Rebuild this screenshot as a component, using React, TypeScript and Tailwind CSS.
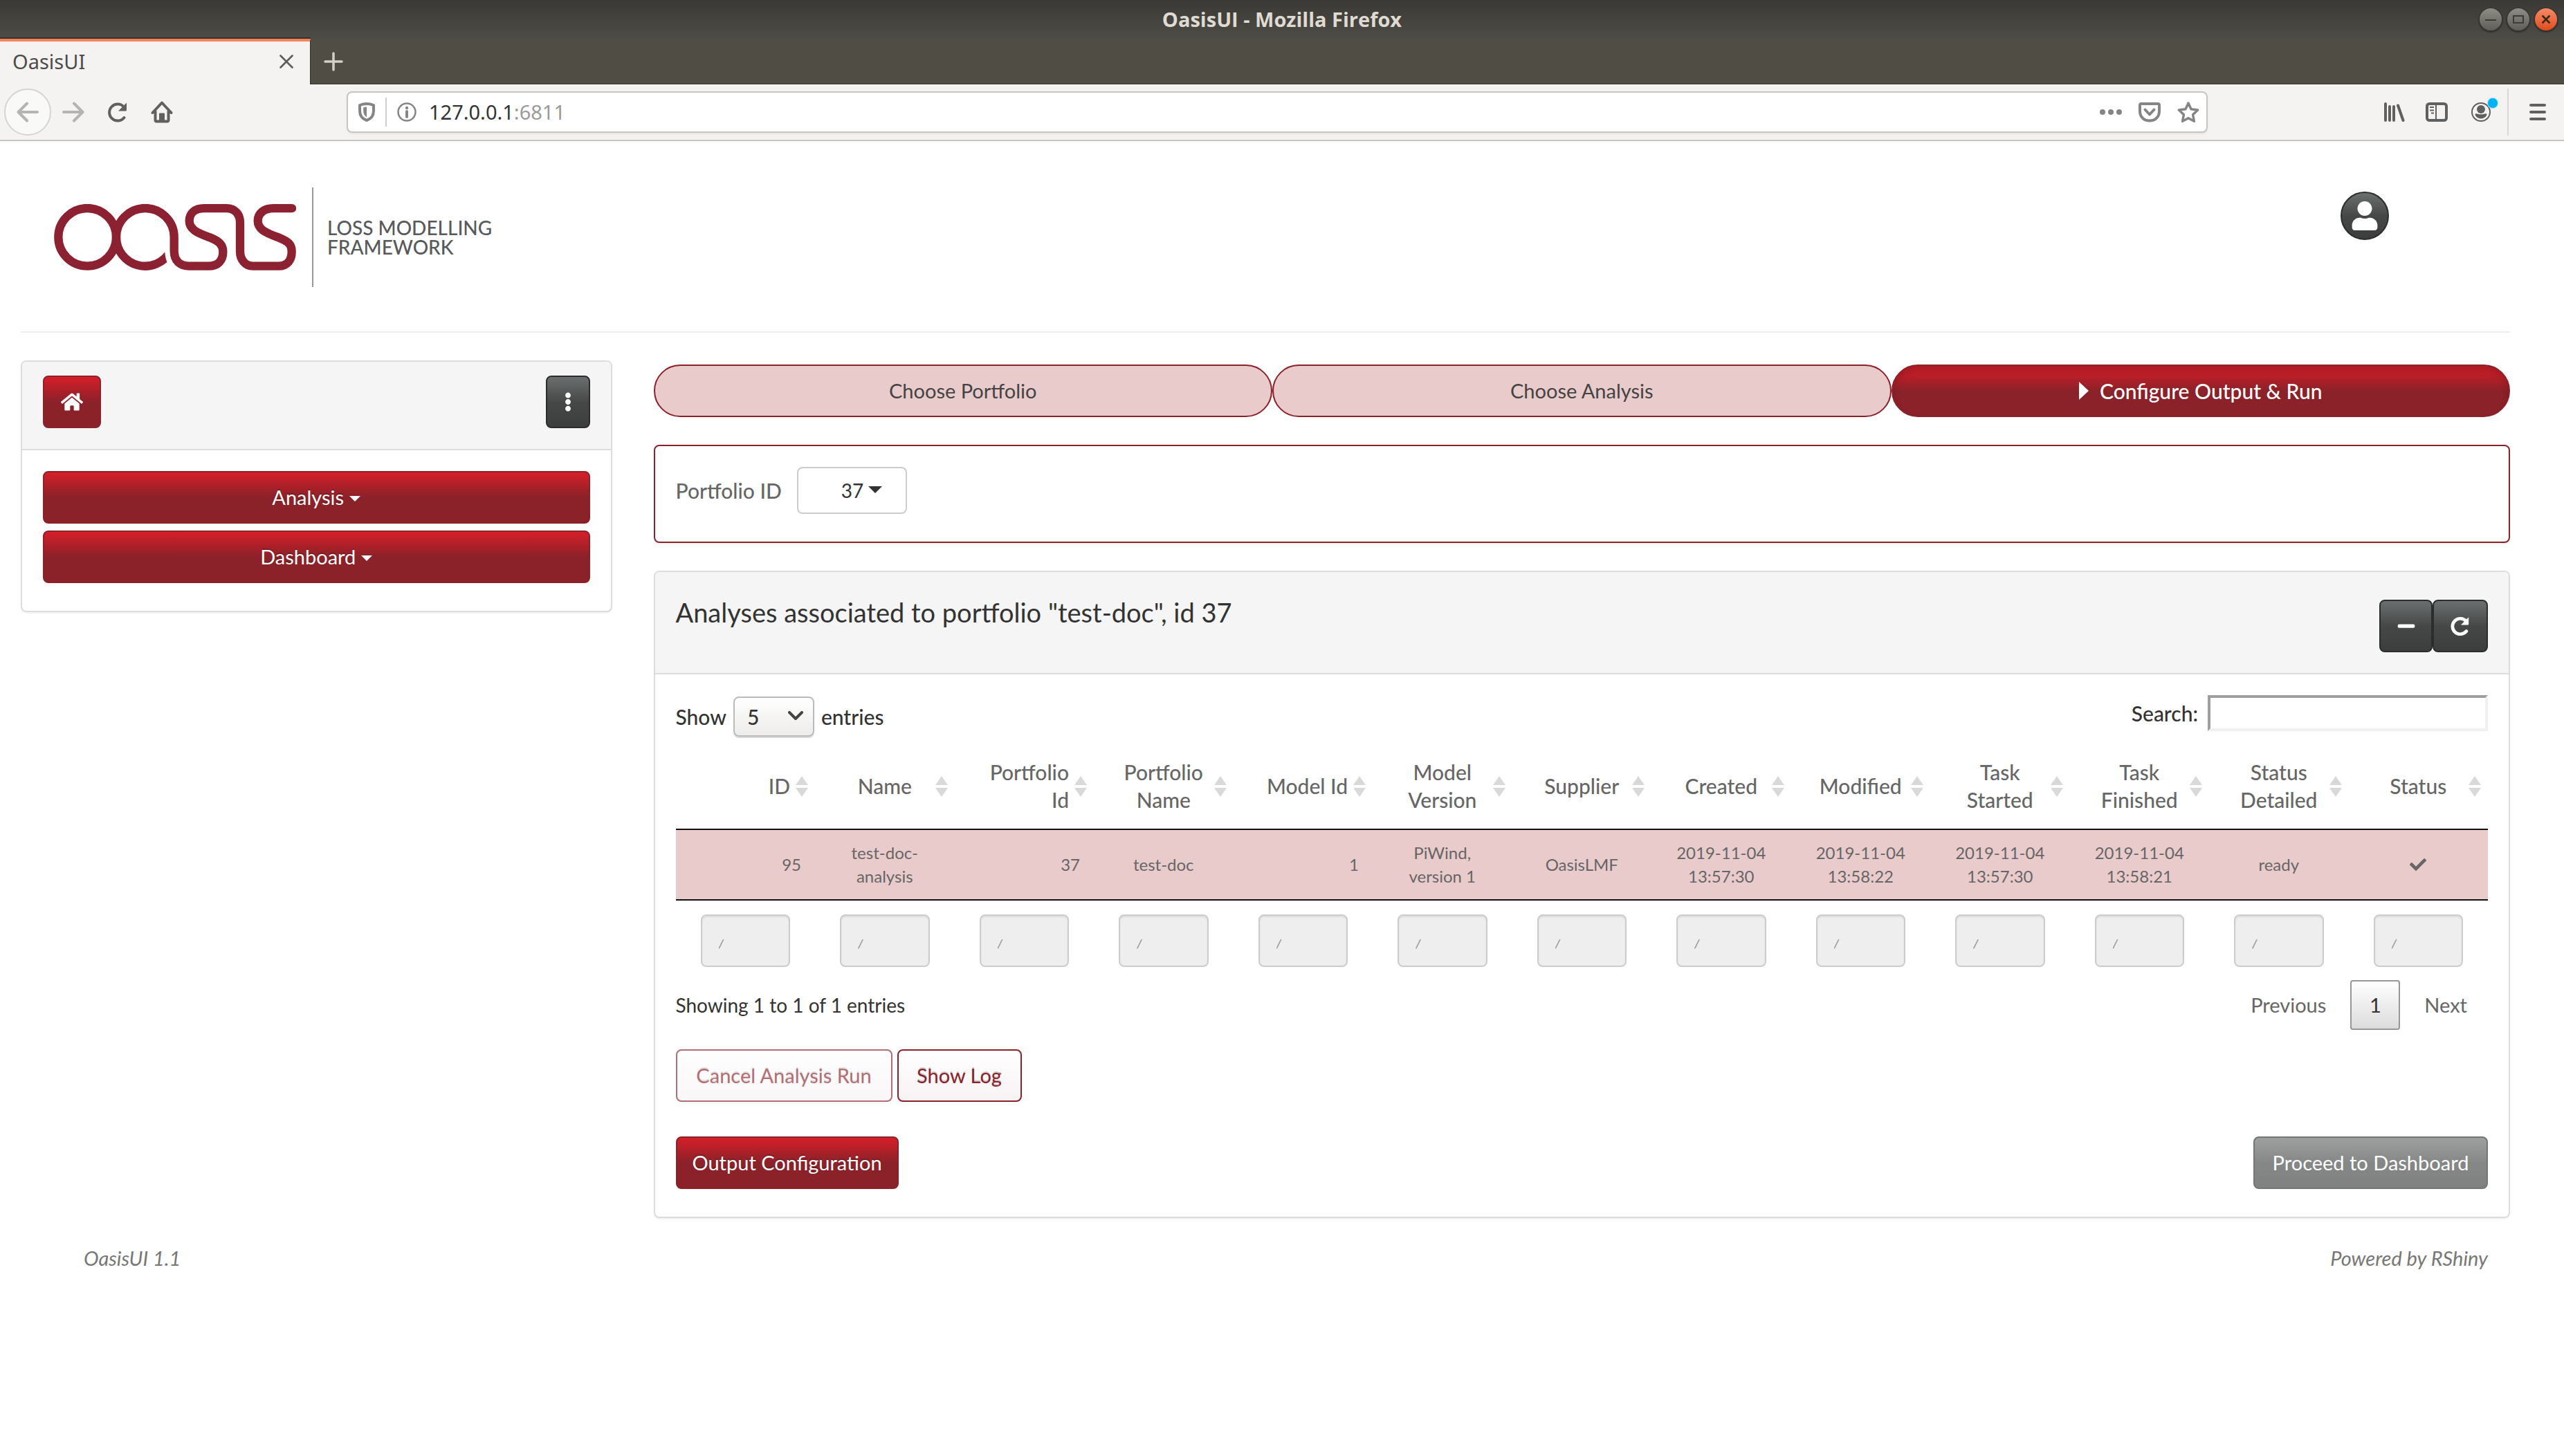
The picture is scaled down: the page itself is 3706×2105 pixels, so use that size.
import React from "react";
import { FaCheck, FaEllipsisV, FaHome, FaMinus, FaUser } from "react-icons/fa";

const RED_BUTTON =
  "h-[76px] rounded-lg border-2 border-[#8b2129] bg-[linear-gradient(#d61f29,#8b2129_50%,#8b2129)] text-[29px] text-white [text-shadow:0_-2px_0_rgba(0,0,0,0.2)]";
const DARK_BUTTON =
  "flex h-[76px] items-center justify-center rounded-lg border-2 border-[#2b2d2d] bg-[linear-gradient(#6b6f6f,#464847_50%,#3c3e3e)] text-[29px] text-white";

type Align = "right" | "center";
type Column = { title: string; value: React.ReactNode; align: Align };

const columns: Column[] = [
  { title: "ID", value: "95", align: "right" },
  { title: "Name", value: "test-doc-analysis", align: "center" },
  { title: "Portfolio Id", value: "37", align: "right" },
  { title: "Portfolio Name", value: "test-doc", align: "center" },
  { title: "Model Id", value: "1", align: "right" },
  { title: "Model Version", value: "PiWind, version 1", align: "center" },
  { title: "Supplier", value: "OasisLMF", align: "center" },
  { title: "Created", value: "2019-11-04 13:57:30", align: "center" },
  { title: "Modified", value: "2019-11-04 13:58:22", align: "center" },
  { title: "Task Started", value: "2019-11-04 13:57:30", align: "center" },
  { title: "Task Finished", value: "2019-11-04 13:58:21", align: "center" },
  { title: "Status Detailed", value: "ready", align: "center" },
  { title: "Status", value: <FaCheck className="mx-auto size-6" aria-label="completed" />, align: "center" },
];

function ReloadIcon({ className, width }: { className: string; width: number }) {
  return (
    <svg viewBox="0 0 32 32" className={className} fill="none" aria-hidden="true">
      <path d="M25.5 24A12 12 0 1 1 25 8.5" stroke="currentColor" strokeWidth={width} strokeLinecap="round" />
      <path d="M29 2.5v10.5a1.5 1.5 0 0 1-1.5 1.5H17z" fill="currentColor" />
    </svg>
  );
}

function WindowButtons() {
  return (
    <div className="flex gap-2">
      <button aria-label="Minimize" className="size-8 rounded-full bg-linear-to-b from-[#8f8d86] to-[#5f5e58] shadow-[0_1px_1px_2px_#35342f]">
        <svg viewBox="0 0 32 32" className="size-8" stroke="#3c3b37" strokeWidth="2"><path d="M8 17h16" /></svg>
      </button>
      <button aria-label="Maximize" className="size-8 rounded-full bg-linear-to-b from-[#8f8d86] to-[#5f5e58] shadow-[0_1px_1px_2px_#35342f]">
        <svg viewBox="0 0 32 32" className="size-8" fill="none" stroke="#3c3b37" strokeWidth="2"><path d="M9 11h14v10H9z" /></svg>
      </button>
      <button aria-label="Close" className="size-8 rounded-full bg-linear-to-b from-[#f58a66] to-[#df4a16] shadow-[0_1px_1px_2px_#35342f]">
        <svg viewBox="0 0 32 32" className="size-8" stroke="#3a2a12" strokeWidth="2.5"><path d="M10.500 10.500l11 11M21.500 10.500l-11 11" /></svg>
      </button>
    </div>
  );
}

function BrowserChrome() {
  return (
    <div className="font-['Noto_Sans','Open_Sans',sans-serif] text-[29px] leading-9 text-[#4c4c4c]">
      <div className="grid h-14 grid-cols-[1fr_auto_1fr] items-center bg-linear-to-b from-[#3a3935] to-[#4d4c46] px-2.5">
        <span />
        <h1 className="font-['Open_Sans',sans-serif] font-bold text-[#dfdbd2]">OasisUI - Mozilla Firefox</h1>
        <div className="flex justify-end"><WindowButtons /></div>
      </div>
      <div className="flex h-[66px] items-stretch border-b border-[#33322e] bg-[#504d45]">
        <div className="-mb-px flex w-[449px] items-center border-t-4 border-r border-t-[#f58559] border-r-[#33322e] bg-[#f4f3f1] pr-6 pb-1 pl-[18px] shadow-[0_-2px_0_#33322e]">
          <span className="flex-1">OasisUI</span>
          <button aria-label="Close tab">
            <svg viewBox="0 0 20 20" className="size-5" stroke="#5c5c5c" strokeWidth="2.600" strokeLinecap="round"><path d="M1.500 1.500l17 17M18.500 1.500l-17 17" /></svg>
          </button>
        </div>
        <button aria-label="New tab" className="flex w-[66px] items-center justify-center">
          <svg viewBox="0 0 28 28" className="size-7" stroke="#d3d0ca" strokeWidth="3.500" strokeLinecap="round"><path d="M14 2v24M2 14h24" /></svg>
        </button>
      </div>
      <div className="flex items-center border-b-2 border-[#c8c5c1] bg-[#f4f3f1] py-1.5 text-[#606060]">
        <div className="flex w-[501px] shrink-0 items-center pl-1.5">
          <button aria-label="Back" className="flex size-[68px] items-center justify-center rounded-full border-2 border-[#d5d4d2] bg-[#f9f9f8] text-[#b5b4b2]">
            <svg viewBox="0 0 32 32" className="size-8" fill="none" stroke="currentColor" strokeWidth="4" strokeLinecap="round" strokeLinejoin="round"><path d="M30 16H2.500M15 3.500L2.500 16 15 28.500" /></svg>
          </button>
          <button aria-label="Forward" className="ml-4 text-[#b5b4b2]">
            <svg viewBox="0 0 32 32" className="size-8" fill="none" stroke="currentColor" strokeWidth="4" strokeLinecap="round" strokeLinejoin="round"><path d="M2 16h27.500M17 3.500L29.500 16 17 28.500" /></svg>
          </button>
          <button aria-label="Reload" className="ml-8"><ReloadIcon className="size-8" width={4} /></button>
          <button aria-label="Home" className="ml-8">
            <svg viewBox="0 0 32 32" className="size-8" fill="none" stroke="currentColor" strokeWidth="4" strokeLinecap="round" strokeLinejoin="round">
              <path d="M2.500 17L16 2.500 29.500 17M6.500 15v13a1.500 1.500 0 0 0 1.500 1.500h16a1.500 1.500 0 0 0 1.500-1.500V15" />
              <path d="M13 29V18.500h6V29" fill="currentColor" strokeWidth="2" />
            </svg>
          </button>
        </div>
        <div className="flex h-[60px] min-w-0 flex-1 items-center rounded-lg border-2 border-[#c8c5c1] bg-white pr-2.5 pl-[15px] text-[#858585] shadow-[0_2px_3px_rgba(0,0,0,0.06)]">
          <svg viewBox="0 0 24 28" className="h-7 w-6" fill="none" aria-hidden="true">
            <path d="M12 2C8 2 5 2.800 2 4v8c0 7 4 12 10 14 6-2 10-7 10-14V4c-3-1.200-6-2-10-2z" stroke="currentColor" strokeWidth="4" strokeLinejoin="round" />
            <path d="M12 6.500v15c-3-2-4.800-5.500-4.800-9.500V7.500c1.500-.6 3-1 4.800-1z" fill="currentColor" />
          </svg>
          <span className="mx-[15px] h-[42px] w-0.5 bg-[#cfcdca]" />
          <svg viewBox="0 0 28 28" className="size-7" fill="none" stroke="currentColor" strokeWidth="2.500" aria-hidden="true">
            <circle cx="14" cy="14" r="12.500" /><path d="M14 13v8" strokeWidth="4" strokeLinecap="round" /><circle cx="14" cy="8" r="2.200" fill="currentColor" stroke="none" />
          </svg>
          <p className="ml-[18px] flex-1 text-[#9a9a9a]"><span className="text-[#333]">127.0.0.1</span>:6811</p>
          <button aria-label="Page actions">
            <svg viewBox="0 0 32 32" className="size-8" fill="currentColor"><circle cx="4" cy="16" r="4" /><circle cx="16" cy="16" r="4" /><circle cx="28" cy="16" r="4" /></svg>
          </button>
          <button aria-label="Save to Pocket" className="ml-6">
            <svg viewBox="0 0 32 32" className="size-8" fill="none" stroke="currentColor" strokeWidth="4" strokeLinecap="round" strokeLinejoin="round"><path d="M4 4h24a2 2 0 0 1 2 2v9c0 8-6 13.500-14 13.500S2 23 2 15V6a2 2 0 0 1 2-2z" /><path d="M9.500 12.500l6.500 7 6.500-7" /></svg>
          </button>
          <button aria-label="Bookmark this page" className="ml-6">
            <svg viewBox="0 0 32 32" className="size-8" fill="none" stroke="currentColor" strokeWidth="3.500" strokeLinejoin="round"><path d="M16 3l4 8.800 9.600 1.200-7 6.700 1.800 9.600L16 24.700l-8.400 4.600 1.800-9.600-7-6.700L12 11.800z" /></svg>
          </button>
        </div>
        <div className="flex w-[515px] shrink-0 items-center justify-end pr-[26px]">
          <button aria-label="Library">
            <svg viewBox="0 0 32 32" className="size-8" stroke="currentColor" strokeWidth="4" strokeLinecap="round"><path d="M4 4v24M10 8v20M16 8v20M22 6.500l7.500 21.500" /></svg>
          </button>
          <button aria-label="Sidebars" className="ml-[30px]">
            <svg viewBox="0 0 32 32" className="size-8" fill="none" stroke="currentColor" strokeWidth="4"><rect x="2" y="4" width="28" height="24" rx="3.500" /><path d="M15 4v24M6 9h6M6 13.500h6M8 17.500h4" strokeWidth="2" /></svg>
          </button>
          <button aria-label="Account" className="relative ml-8">
            <svg viewBox="0 0 32 32" className="size-8" fill="currentColor"><circle cx="16" cy="16" r="13" fill="none" stroke="currentColor" strokeWidth="2" /><circle cx="16" cy="12" r="6" /><path d="M8 18.500c1.500-.9 3 .8 8 .8s6.500-1.700 8-.8c1.800 1.300-2 7-8 7s-9.800-5.700-8-7z" /></svg>
            <span className="absolute -top-1 -right-2 size-3.5 rounded-full bg-[#00b3f4] ring-1 ring-[#a5e3f7]" />
          </button>
          <span className="ml-[22px] h-[68px] w-0.5 bg-[#dad8d5]" />
          <button aria-label="Open menu" className="ml-[30px]">
            <svg viewBox="0 0 24 32" className="h-8 w-6" stroke="currentColor" strokeWidth="4" strokeLinecap="round"><path d="M2 6h20M2 16h20M2 26h20" /></svg>
          </button>
        </div>
      </div>
    </div>
  );
}

function Logo() {
  return (
    <svg viewBox="24 105 1050 288" className="h-24 w-[350px]" fill="none" stroke="#8b2131" strokeWidth="37" role="img" aria-label="Oasis">
      <circle cx="168.500" cy="248.500" r="125.500" />
      <path d="M294 248.500A125.500 125.500 0 0 0 529 310" />
      <path d="M545 296C545 340 556 372 610 380" stroke="#fff" strokeWidth="82" />
      <path
        d="M294 248.500A125.500 125.500 0 0 1 545 248.500V308C545 350 570 374 610 374H695C735 374 757 350 757 313C757 285 745 268 700 250C645 230 611 215 611 178C611 145 635 123.500 675 123.500H772C810 123.500 831 150 831 185V310C831 345 852 374 887 374H998C1035 374 1055 348 1055 312C1055 280 1040 267 1000 251C935 228 908 212 908 178C908 145 935 123.500 975 123.500H1055"
      />
      <circle cx="1056" cy="123.500" r="18.500" fill="#8b2131" stroke="none" />
    </svg>
  );
}

function Sidebar() {
  return (
    <aside className="col-span-3 self-start rounded-lg border-2 border-[#ddd] bg-white shadow-[0_2px_2px_rgba(0,0,0,0.05)]">
      <div className="flex justify-between rounded-t-md border-b-2 border-[#ddd] bg-[#f5f5f5] px-[30px] pt-5 pb-[30px]">
        <button aria-label="Home" className={"flex w-[84px] items-center justify-center " + RED_BUTTON}><FaHome className="size-8" /></button>
        <button aria-label="More options" className={"w-16 " + DARK_BUTTON}><FaEllipsisV className="size-7" /></button>
      </div>
      <nav className="flex flex-col gap-2.5 px-[30px] pt-[30px] pb-10">
        {["Analysis", "Dashboard"].map((name) => (
          <button key={name} className={"flex items-center justify-center gap-2 " + RED_BUTTON}>
            {name}
            <svg viewBox="0 0 16 8" className="mt-1 h-2 w-4" fill="currentColor" aria-hidden="true"><path d="M0 0h16L8 8z" /></svg>
          </button>
        ))}
      </nav>
    </aside>
  );
}

function Steps() {
  const step = "h-[76px] flex-1 rounded-full border-2 border-[#8b2129] ";
  return (
    <div className="mt-1.5 flex">
      <button className={step + "bg-[#e9cbcc] text-[29px] text-[#444]"}>Choose Portfolio</button>
      <button className={step + "bg-[#e9cbcc] text-[29px] text-[#444]"}>Choose Analysis</button>
      <button
        aria-current="step"
        className={step + "flex items-center justify-center gap-4 bg-[linear-gradient(#c41e28,#bb1e27_20%,#8b2129_50%,#8b2129)] text-[30px] font-medium text-white shadow-[inset_0_6px_10px_rgba(0,0,0,0.125)]"}
      >
        <svg viewBox="0 0 14 26" className="h-[26px] w-3.5" fill="currentColor" aria-hidden="true"><path d="M0 0l14 13L0 26z" /></svg>
        Configure Output &amp; Run
      </button>
    </div>
  );
}

function AnalysesTable() {
  return (
    <table className="mt-[11px] w-full table-fixed border-collapse">
      <thead>
        <tr className="border-b-2 border-[#111]">
          {columns.map((c) => (
            <th key={c.title} className={"relative pt-5 pb-[22px] text-[30px] leading-10 font-medium text-[#666] " + (c.align === "right" ? "pr-9 pl-5 text-right" : "px-8 text-center")}>
              {c.align === "right" ? c.title.replace("Portfolio ", "Portfolio\n").split("\n").map((line) => <span key={line} className="block">{line}</span>) : c.title}
              <svg viewBox="0 0 18 30" className="absolute top-1/2 right-2.5 h-[30px] w-[18px] -translate-y-1/2" fill="#d9d9d9" aria-hidden="true">
                <path d="M9 0l9 13H0zM9 30l9-13H0z" />
              </svg>
            </th>
          ))}
        </tr>
      </thead>
      <tbody>
        <tr className="border-b-2 border-[#111] bg-[#e9cbcc]">
          {columns.map((c) => (
            <td key={c.title} className={"py-4 text-2xl leading-[34px] text-[#666] " + (c.align === "right" ? "px-5 text-right" : "px-9 text-center")}>
              {c.value}
            </td>
          ))}
        </tr>
        <tr>
          {columns.map((c) => (
            <td key={c.title} className="px-9 pt-5">
              <input
                type="search"
                disabled
                aria-label={"Filter " + c.title}
                placeholder="/"
                className="h-[76px] w-full rounded-lg border-2 border-[#ccc] bg-[#eee] pt-2 pl-6 text-lg italic shadow-[inset_0_2px_2px_rgba(0,0,0,0.075)] placeholder:text-[#888]"
              />
            </td>
          ))}
        </tr>
      </tbody>
    </table>
  );
}

function AnalysesPanel() {
  return (
    <section className="mt-10 rounded-lg border-2 border-[#ddd] bg-white shadow-[0_2px_2px_rgba(0,0,0,0.05)]">
      <div className="flex justify-between rounded-t-md border-b-2 border-[#ddd] bg-[#f5f5f5] px-[30px] pt-10 pb-[30px]">
        <h2 className="text-[38px] leading-9 text-[#333]">Analyses associated to portfolio "test-doc", id 37</h2>
        <div className="flex">
          <button aria-label="Collapse" className={"w-[77px] " + DARK_BUTTON}><FaMinus className="size-7" /></button>
          <button aria-label="Refresh" className={"w-20 " + DARK_BUTTON}><ReloadIcon className="size-[30px]" width={5} /></button>
        </div>
      </div>
      <div className="px-[30px] pt-[30px] pb-10">
        <div className="flex items-start justify-between text-[30px] font-medium text-[#333]">
          <label className="flex items-center gap-2.5 pt-0.5">
            Show
            <span className="relative">
              <select className="block h-[58px] w-[117px] appearance-none rounded-lg border-2 border-[#bbb] bg-linear-to-b from-white to-[#edecea] pl-[18px] shadow-[0_2px_1px_rgba(0,0,0,0.15)]">
                <option>5</option>
              </select>
              <svg viewBox="0 0 22 14" className="pointer-events-none absolute top-[21px] right-4 h-3.5 w-[22px]" fill="none" stroke="#444" strokeWidth="4" strokeLinecap="round" strokeLinejoin="round" aria-hidden="true"><path d="M2 2l9 9 9-9" /></svg>
            </span>
            entries
          </label>
          <label className="flex items-center gap-3.5">
            Search:
            <input type="search" className="h-[52px] w-[405px] border-4 border-t-[#9e9e9e] border-r-[#f0f0f0] border-b-[#f0f0f0] border-l-[#9e9e9e] bg-white px-2" />
          </label>
        </div>
        <AnalysesTable />
        <div className="mt-[19px] flex items-center justify-between">
          <p className="text-[#333]">Showing 1 to 1 of 1 entries</p>
          <div className="flex items-center pr-[30px] text-[29px] text-[#666]">
            <button>Previous</button>
            <button aria-current="page" className="mr-[35px] ml-[35px] h-[72px] w-[72px] rounded-sm border-2 border-[#979797] bg-linear-to-b from-white to-[#dcdcdc] text-[#333]">1</button>
            <button>Next</button>
          </div>
        </div>
        <div className="mt-7 flex gap-[7px] text-[29px]">
          <button disabled className="h-[76px] w-[313px] rounded-lg border-2 border-[#8b2129] bg-linear-to-b from-white to-[#f6f2f2] text-[#8b2129] opacity-65 [text-shadow:0_-2px_0_rgba(0,0,0,0.2)]">Cancel Analysis Run</button>
          <button className="h-[76px] w-[180px] rounded-lg border-2 border-[#8b2129] bg-linear-to-b from-white to-[#f8f2f3] text-[#8b2129] [text-shadow:0_-2px_0_rgba(0,0,0,0.2)]">Show Log</button>
        </div>
        <div className="mt-[50px] flex justify-between">
          <button className={"w-[322px] " + RED_BUTTON}>Output Configuration</button>
          <button disabled className={"w-[339px] opacity-65 " + DARK_BUTTON}>Proceed to Dashboard</button>
        </div>
      </div>
    </section>
  );
}

export default function App() {
  return (
    <div className="min-h-screen bg-white">
      <BrowserChrome />
      <div className="pr-[78px] pl-[30px] font-['Lato',sans-serif] text-[28px] leading-10">
        <header className="flex items-center border-b-2 border-[#eee] pt-[67px] pb-16 pl-12">
          <Logo />
          <div className="ml-[23px] flex h-36 items-center border-l-2 border-[#97999b] pl-5 text-[28px] leading-7 font-medium text-[#58595b]">
            <p>LOSS MODELLING<br />FRAMEWORK</p>
          </div>
          <button aria-label="User menu" className="mt-1.5 mr-[175px] ml-auto flex size-[70px] items-center justify-center self-start rounded-full border-2 border-[#2b2d2d] bg-[linear-gradient(#6b6f6f,#464847_50%,#3c3e3e)] text-white">
            <FaUser className="size-[42px]" />
          </button>
        </header>
        <main className="grid grid-cols-12 gap-x-[60px] pt-10">
          <Sidebar />
          <div className="col-span-9">
            <Steps />
            <section className="mt-10 rounded-lg border-2 border-[#8b2129] px-[30px] pt-[30px] pb-10 shadow-[0_2px_2px_rgba(0,0,0,0.05)]">
              <label className="flex items-center gap-[22px] text-[30px] font-medium text-[#666]">
                Portfolio ID
                <span className="relative">
                  <select className="block h-[68px] w-[159px] appearance-none rounded-lg border-2 border-[#ccc] bg-white pl-[62px] text-[28px] font-normal text-[#333]">
                    <option>37</option>
                  </select>
                  <svg viewBox="0 0 20 10" className="pointer-events-none absolute top-7 right-9 h-2.5 w-5" fill="#333" aria-hidden="true"><path d="M0 0h20L10 10z" /></svg>
                </span>
              </label>
            </section>
            <AnalysesPanel />
          </div>
        </main>
        <footer className="mt-10 flex justify-between pr-8 pl-[91px] text-[29px] leading-9 text-[#777] italic">
          <span>OasisUI 1.1</span>
          <span>Powered by RShiny</span>
        </footer>
      </div>
    </div>
  );
}
